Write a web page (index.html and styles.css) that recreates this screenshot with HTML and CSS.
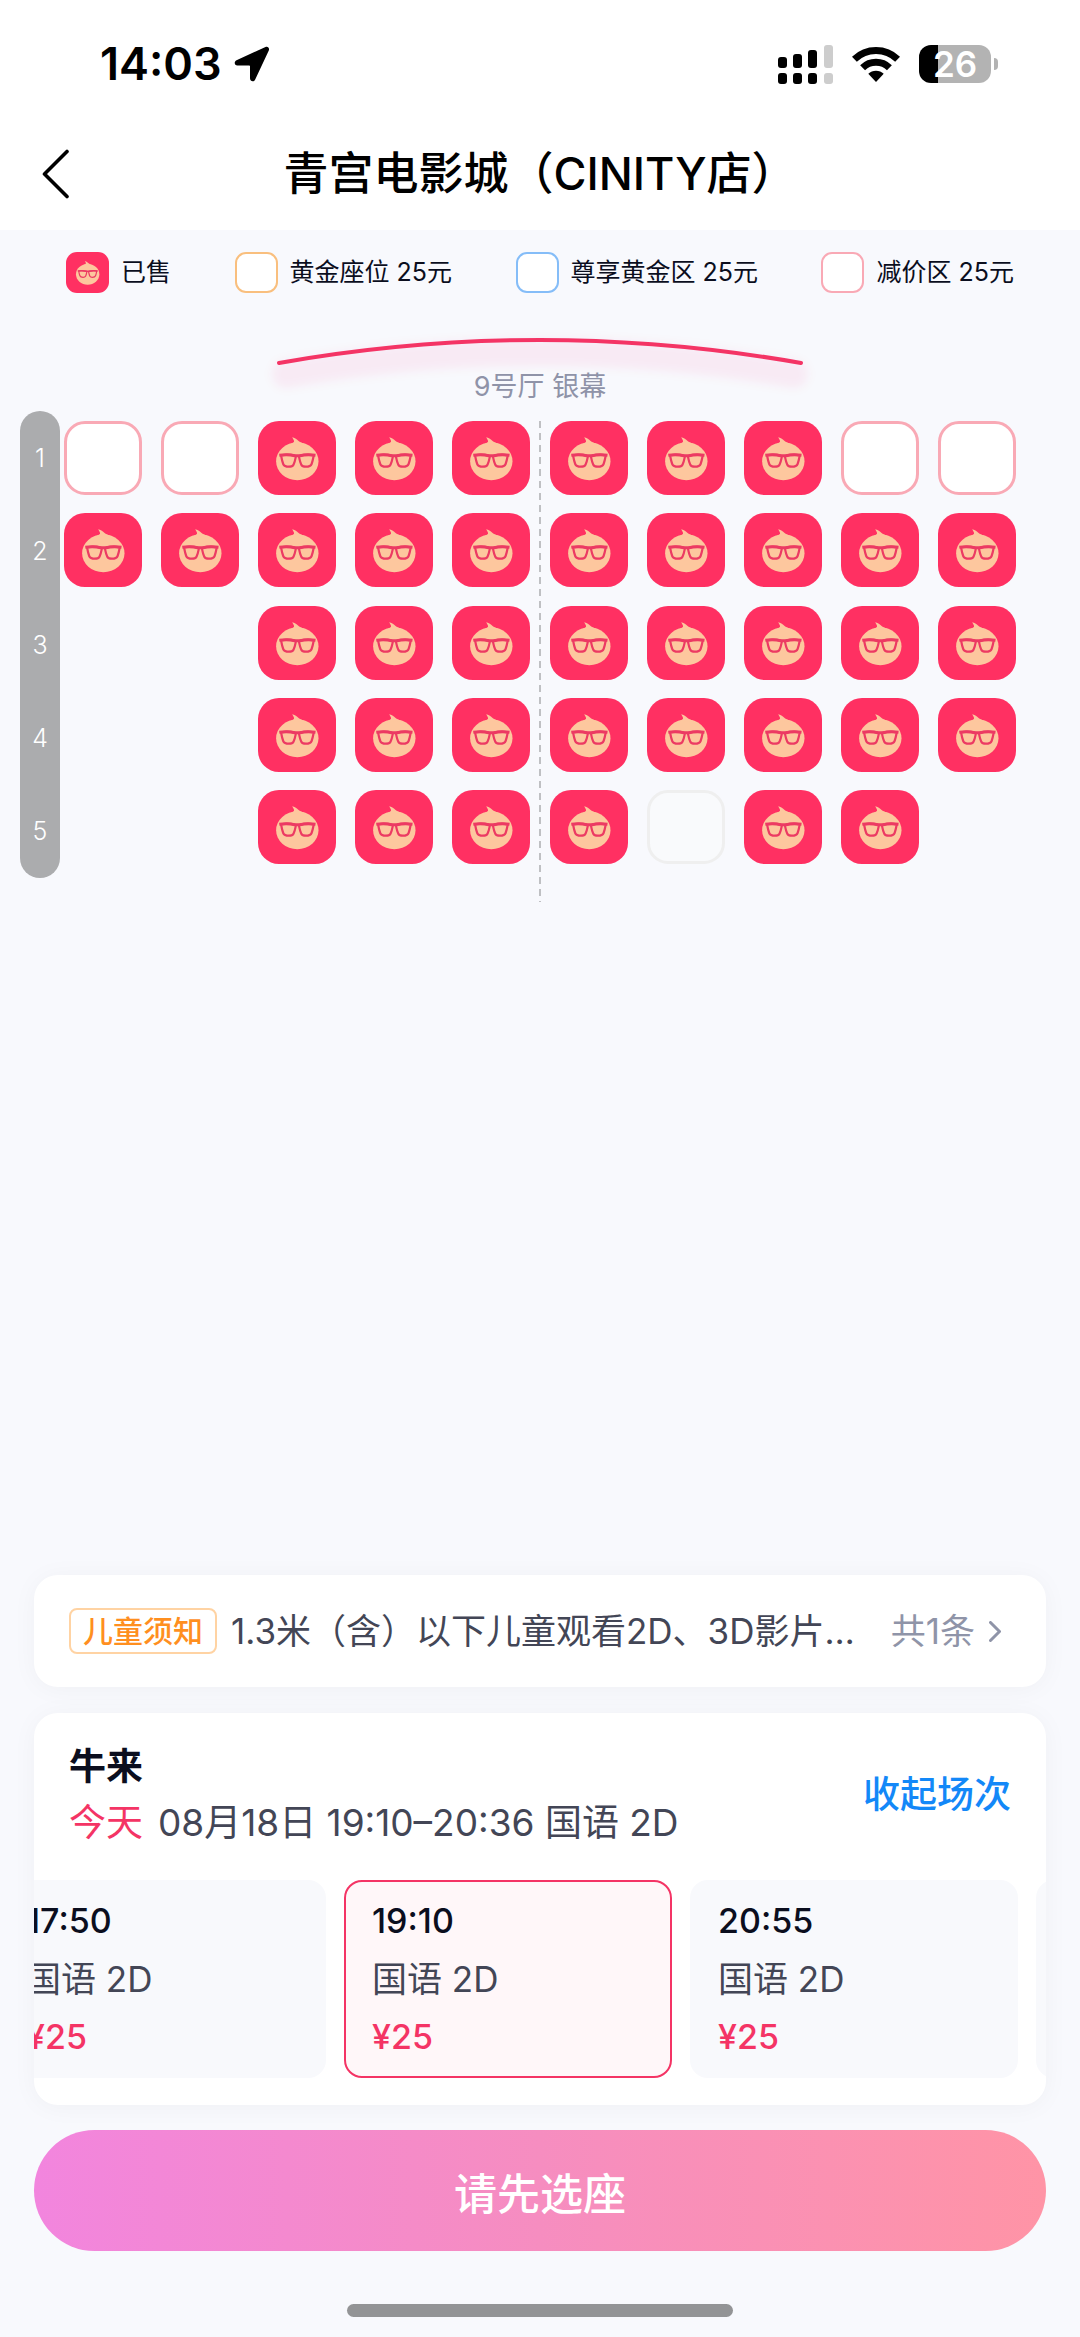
FILE: index.html
```html
<!DOCTYPE html>
<html lang="zh-CN">
<head>
<meta charset="utf-8">
<meta name="viewport" content="width=device-width, initial-scale=1">
<title>青宫电影城（CINITY店）</title>
<link rel="stylesheet" href="styles.css">
</head>
<body>
<svg class="defs" aria-hidden="true">
  <symbol id="face" viewBox="0 0 78 74">
    <ellipse cx="39.300" cy="40.300" rx="21.200" ry="18.900" fill="#fdc79e"/>
    <path fill="#fdc79e" d="M34.200 16.300c2.200.6 4.300 1.900 6.100 3.400 1.700 1.400 3.700 2.300 6.700 3.300L31 24c2.500-1.500 4.500-2 5-3.200.4-1.300-.9-2.800-1.800-4.500z"/>
    <g fill="none" stroke="#ec3a63" stroke-width="2.200" stroke-linejoin="round">
      <path d="M23 34.300c4.500-.9 9.500-.8 13.800.3.800.3 1.100.9.900 1.800-.5 2.700-1.200 5.300-2.200 7.300-.9 1.800-2.600 2-4.600 2-2.800 0-4.800-.4-5.700-2.700-.9-2.300-1.600-5.500-2.200-8.700z"/>
      <path d="M55.800 34.300c-4.500-.9-9.500-.8-13.800.3-.8.300-1.100.9-.9 1.800.5 2.700 1.200 5.300 2.200 7.300.9 1.800 2.600 2 4.600 2 2.800 0 4.800-.4 5.700-2.700.9-2.300 1.600-5.500 2.200-8.700z"/>
      <path stroke-width="3" d="M21.300 34.300c5.500-.7 11-.6 15.500.5h5.200c4.500-1.100 10-1.200 15.500-.5"/>
    </g>
  </symbol>
</svg>

<header class="top">
  <div class="status">
    <div class="clock">
      <time>14:03</time>
      <svg width="36" height="36" viewBox="0 0 36 36" aria-hidden="true"><path d="M31.500 1 2.500 14.300C-.2 15.600.3 19.300 3.400 19.500H15.200c.5 0 .8.3.8.8v12c0 3.300 4 4 5.200 1.100L34.800 4.400C35.800 2 33.800 0 31.500 1z"/></svg>
    </div>
    <div class="indicators">
      <svg width="55" height="39" viewBox="0 0 55 39" aria-hidden="true">
        <g><rect y="12" width="9" height="11" rx="3"/><rect x="15" y="9" width="9" height="14" rx="3"/><rect x="30" y="5" width="9" height="18" rx="3"/><rect y="28" width="9" height="11" rx="3"/><rect x="15" y="28" width="9" height="11" rx="3"/><rect x="30" y="28" width="9" height="11" rx="3"/></g>
        <g fill="#cdcdcd"><rect x="46" y="0" width="9" height="23" rx="3"/><rect x="46" y="28" width="9" height="11" rx="3"/></g>
      </svg>
      <svg width="48" height="36" viewBox="0 0 48 36" aria-hidden="true">
        <g fill="none" stroke="#000" stroke-width="7"><path d="M2.400 13.200a31 31 0 0 1 43.200 0"/><path d="M10.600 21.800a19.200 19.200 0 0 1 26.800 0"/></g>
        <path d="M16.300 27.800a11 11 0 0 1 15.400 0L24 36z"/>
      </svg>
      <div class="battery"><span class="battery-level">26</span></div>
    </div>
  </div>
  <nav class="nav">
    <button class="back" type="button" aria-label="返回"><svg width="28" height="50" viewBox="0 0 28 50" aria-hidden="true"><path d="M25 2.500 2.500 25 25 47.500" fill="none" stroke="#000" stroke-width="3.600" stroke-linecap="round" stroke-linejoin="round"/></svg></button>
    <h1>青宫电影城（CINITY店）</h1>
  </nav>
</header>

<main class="hall">
  <ul class="legend">
    <li><span class="swatch sold"><svg aria-hidden="true"><use href="#face"/></svg></span>已售</li>
    <li><span class="swatch gold"></span>黄金座位 25元</li>
    <li><span class="swatch blue"></span>尊享黄金区 25元</li>
    <li><span class="swatch pink"></span>减价区 25元</li>
  </ul>

  <div class="stage">
    <svg width="564" height="46" viewBox="0 0 564 46" aria-hidden="true">
      <defs><filter id="soft" x="-10%" y="-100%" width="120%" height="300%"><feGaussianBlur stdDeviation="5"/></filter></defs>
      <path d="M28 46Q282 2 536 46" fill="none" stroke="#ff3062" stroke-opacity=".06" stroke-width="28" stroke-linecap="round" filter="url(#soft)"/>
      <path d="M21 35Q282-11 543 35" fill="none" stroke="#f43465" stroke-width="4" stroke-linecap="round"/>
    </svg>
    <p>9号厅 银幕</p>
  </div>

  <div class="map">
    <ol class="rows"><li>1</li><li>2</li><li>3</li><li>4</li><li>5</li></ol>
    <div class="seats">
      <button class="seat pink" aria-label="1排1座"></button>
      <button class="seat pink" aria-label="1排2座"></button>
      <button class="seat sold" disabled><svg><use href="#face"/></svg></button>
      <button class="seat sold" disabled><svg><use href="#face"/></svg></button>
      <button class="seat sold" disabled><svg><use href="#face"/></svg></button>
      <button class="seat sold" disabled><svg><use href="#face"/></svg></button>
      <button class="seat sold" disabled><svg><use href="#face"/></svg></button>
      <button class="seat sold" disabled><svg><use href="#face"/></svg></button>
      <button class="seat pink" aria-label="1排9座"></button>
      <button class="seat pink" aria-label="1排10座"></button>

      <button class="seat sold" disabled><svg><use href="#face"/></svg></button>
      <button class="seat sold" disabled><svg><use href="#face"/></svg></button>
      <button class="seat sold" disabled><svg><use href="#face"/></svg></button>
      <button class="seat sold" disabled><svg><use href="#face"/></svg></button>
      <button class="seat sold" disabled><svg><use href="#face"/></svg></button>
      <button class="seat sold" disabled><svg><use href="#face"/></svg></button>
      <button class="seat sold" disabled><svg><use href="#face"/></svg></button>
      <button class="seat sold" disabled><svg><use href="#face"/></svg></button>
      <button class="seat sold" disabled><svg><use href="#face"/></svg></button>
      <button class="seat sold" disabled><svg><use href="#face"/></svg></button>

      <button class="seat sold row-start" disabled><svg><use href="#face"/></svg></button>
      <button class="seat sold" disabled><svg><use href="#face"/></svg></button>
      <button class="seat sold" disabled><svg><use href="#face"/></svg></button>
      <button class="seat sold" disabled><svg><use href="#face"/></svg></button>
      <button class="seat sold" disabled><svg><use href="#face"/></svg></button>
      <button class="seat sold" disabled><svg><use href="#face"/></svg></button>
      <button class="seat sold" disabled><svg><use href="#face"/></svg></button>
      <button class="seat sold" disabled><svg><use href="#face"/></svg></button>

      <button class="seat sold row-start" disabled><svg><use href="#face"/></svg></button>
      <button class="seat sold" disabled><svg><use href="#face"/></svg></button>
      <button class="seat sold" disabled><svg><use href="#face"/></svg></button>
      <button class="seat sold" disabled><svg><use href="#face"/></svg></button>
      <button class="seat sold" disabled><svg><use href="#face"/></svg></button>
      <button class="seat sold" disabled><svg><use href="#face"/></svg></button>
      <button class="seat sold" disabled><svg><use href="#face"/></svg></button>
      <button class="seat sold" disabled><svg><use href="#face"/></svg></button>

      <button class="seat sold row-start" disabled><svg><use href="#face"/></svg></button>
      <button class="seat sold" disabled><svg><use href="#face"/></svg></button>
      <button class="seat sold" disabled><svg><use href="#face"/></svg></button>
      <button class="seat sold" disabled><svg><use href="#face"/></svg></button>
      <button class="seat closed" disabled></button>
      <button class="seat sold" disabled><svg><use href="#face"/></svg></button>
      <button class="seat sold" disabled><svg><use href="#face"/></svg></button>
    </div>
    <span class="axis"></span>
  </div>
</main>

<footer class="panel">
  <a class="card notice" href="#notice">
    <span class="tag">儿童须知</span>
    <span class="notice-text">1.3米（含）以下儿童观看2D、3D影片…</span>
    <span class="count">共1条</span>
    <svg width="12" height="21" viewBox="0 0 12 21" aria-hidden="true"><path d="M1.500 1.500 10.500 10.500 1.500 19.500" fill="none" stroke="#8f94a8" stroke-width="3" stroke-linecap="round" stroke-linejoin="round"/></svg>
  </a>

  <section class="card film">
    <div class="film-head">
      <div>
        <h2>牛来</h2>
        <p class="when"><span class="today">今天</span><span>08月18日 19:10–20:36 国语 2D</span></p>
      </div>
      <button class="fold" type="button">收起场次</button>
    </div>
    <div class="sessions">
      <div class="track">
        <button class="session" type="button"><b>17:50</b><span>国语 2D</span><em>¥25</em></button>
        <button class="session chosen" type="button"><b>19:10</b><span>国语 2D</span><em>¥25</em></button>
        <button class="session" type="button"><b>20:55</b><span>国语 2D</span><em>¥25</em></button>
        <button class="session" type="button" aria-label="下一场"></button>
      </div>
    </div>
  </section>

  <button class="submit" type="button">请先选座</button>
  <div class="home"></div>
</footer>
</body>
</html>
```
FILE: styles.css
```css
* {
  box-sizing: border-box;
  margin: 0;
  padding: 0;
}

body {
  display: flex;
  flex-direction: column;
  min-height: 100vh;
  background: #f8f9fd;
  color: #0b0e1e;
  font-family: Inter, "Noto Sans CJK SC", sans-serif;
}

button {
  border: 0;
  background: none;
  color: inherit;
  font: inherit;
}

svg {
  display: block;
  flex: none;
}

ul,
ol {
  list-style: none;
}

.defs {
  position: absolute;
  width: 0;
  height: 0;
}

/* status bar and title */
.top {
  background: #fff;
  color: #000;
}

.status {
  display: flex;
  align-items: center;
  justify-content: space-between;
  height: 118px;
  padding: 10px 82px 0 100px;
}

.clock {
  display: flex;
  align-items: center;
  gap: 12px;
  font-size: 45px;
  font-weight: 600;
  line-height: 52px;
}

.indicators {
  display: flex;
  align-items: center;
  gap: 19px;
}

.battery {
  display: flex;
  align-items: center;
  gap: 3px;
}

.battery::after {
  width: 4px;
  height: 12px;
  border-radius: 0 6px 6px 0;
  background: #b3b3b3;
  content: "";
}

.battery-level {
  width: 72px;
  height: 38px;
  border-radius: 12px;
  background: linear-gradient(90deg, #000 26%, #b3b3b3 26%);
  color: #fff;
  font-size: 35px;
  font-weight: 600;
  line-height: 38px;
  text-align: center;
}

.nav {
  display: grid;
  grid-template-columns: 72px 1fr 72px;
  align-items: center;
  height: 112px;
}

.back {
  padding-left: 42px;
}

h1 {
  font-size: 45px;
  font-weight: 500;
  line-height: 60px;
  text-align: center;
  white-space: nowrap;
}

/* seat map */
.hall {
  flex: 1;
}

.legend {
  display: flex;
  align-items: center;
  justify-content: space-between;
  height: 84px;
  padding: 0 66px;
  font-size: 25px;
  line-height: 36px;
}

.legend li {
  display: flex;
  align-items: center;
  gap: 12px;
}

.swatch {
  width: 43px;
  height: 41px;
  border: 2px solid;
  border-radius: 11px;
  background: #fff;
}

.swatch svg {
  width: 43px;
  height: 41px;
}

.gold {
  border-color: #f9bf7e;
}

.blue {
  border-color: #85bdf8;
}

.pink {
  border-color: #f9a9b5;
}

.stage {
  display: flex;
  flex-direction: column;
  align-items: center;
  margin: 14px 0 11px;
}

.stage svg {
  overflow: visible;
}

.stage p {
  position: relative;
  color: #8f93a8;
  font-size: 27px;
  line-height: 26px;
}

.map {
  position: relative;
  display: flex;
  gap: 4px;
  padding: 0 64px 0 20px;
}

.rows {
  display: flex;
  flex-direction: column;
  width: 40px;
  height: 467px;
  border-radius: 20px;
  background: #abacae;
  color: #fff;
  font-size: 25px;
  font-weight: 300;
}

.rows li {
  display: grid;
  flex: 1;
  place-items: center;
}

.seats {
  display: grid;
  flex: 1;
  grid-template-columns: repeat(10, 78px);
  align-content: space-between;
  justify-content: space-between;
  padding: 10px 0 14px;
}

.seat {
  height: 74px;
  border: 3px solid;
  border-radius: 21px;
  background: #fff;
}

.seat.pink {
  border-color: #f9a9b5;
}

.seat.closed {
  border-color: #efefef;
  background: #f9fafc;
}

.row-start {
  grid-column-start: 3;
}

.seat.sold,
.swatch.sold {
  border: 0;
  background: #ff3062;
}

.seat svg {
  width: 78px;
  height: 74px;
}

.axis {
  position: absolute;
  top: 10px;
  bottom: -24px;
  left: 50%;
  width: 2px;
  margin-left: -1px;
  background: repeating-linear-gradient(#bfc0c3 0 7px, transparent 7px 12px);
}

/* bottom panel */
.panel {
  padding: 0 34px 20px;
}

.card {
  border-radius: 24px;
  background: #fff;
  box-shadow: 0 2px 26px rgba(0, 0, 0, 0.04);
}

.notice {
  display: flex;
  align-items: center;
  height: 112px;
  margin-bottom: 26px;
  padding: 0 45px 0 35px;
  color: #434656;
  font-size: 35px;
  line-height: 48px;
  text-decoration: none;
}

.tag {
  flex: none;
  padding: 0 12px;
  border: 2px solid #ffd3a3;
  border-radius: 8px;
  color: #ff8f1f;
  font-size: 30px;
  font-weight: 500;
  line-height: 42px;
}

.notice-text {
  flex: 1;
  min-width: 0;
  margin: 0 20px 0 14px;
  overflow: hidden;
  text-overflow: ellipsis;
  white-space: nowrap;
}

.count {
  margin-right: 14px;
  color: #8f94a8;
}

.film {
  margin-bottom: 25px;
  padding-bottom: 27px;
  overflow: hidden;
}

.film-head {
  display: flex;
  align-items: center;
  justify-content: space-between;
  padding: 26px 35px 29px;
}

h2 {
  font-size: 37px;
  font-weight: 600;
  line-height: 56px;
}

.when {
  display: flex;
  gap: 15px;
  color: #434656;
  font-size: 37px;
  line-height: 56px;
}

.today {
  color: #f43465;
}

.fold {
  color: #1388f8;
  font-size: 37px;
  font-weight: 500;
  line-height: 56px;
}

.sessions {
  overflow: hidden;
}

/* the strip rests scrolled to the chosen session */
.track {
  display: flex;
  gap: 18px;
  margin-left: -36px;
}

.session {
  display: flex;
  flex: none;
  flex-direction: column;
  width: 328px;
  height: 198px;
  padding: 10px 26px;
  border: 2px solid #f8f9fc;
  border-radius: 18px;
  background: #f8f9fc;
  font-size: 34px;
  line-height: 58px;
  text-align: left;
}

.session.chosen {
  border-color: #f43465;
  background: #fff7f9;
}

.session b {
  font-weight: 500;
}

.session span {
  color: #434656;
  font-size: 35px;
}

.session em {
  color: #f43465;
  font-style: normal;
  font-weight: 500;
}

.submit {
  display: block;
  width: 100%;
  height: 121px;
  border-radius: 61px;
  background: linear-gradient(90deg, #f285de, #f68dc0 50%, #ff94a6);
  color: #fff;
  font-size: 43px;
  font-weight: 500;
}

.home {
  width: 386px;
  height: 13px;
  margin: 53px auto 0;
  border-radius: 7px;
  background: #939496;
}
```
